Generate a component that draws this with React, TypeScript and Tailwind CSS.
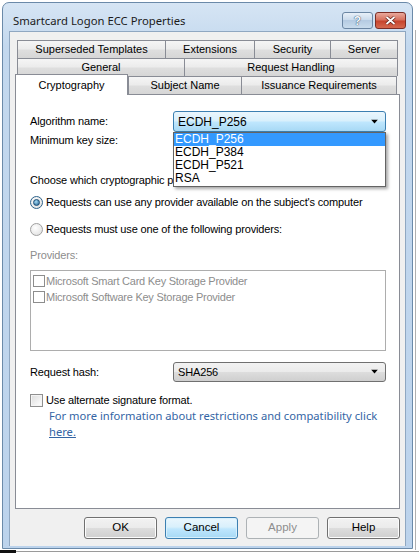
import React from "react";

const sys = { fontFamily: '"Liberation Sans", Arial, sans-serif' };
const seg = { fontFamily: '"Noto Sans", "Open Sans", sans-serif' };

function Tab({ w, label, last }: { w: number; label: string; last?: boolean }) {
  return (
    <div
      style={{ width: w }}
      className={`h-[18px] border-t border-l ${last ? "border-r" : ""} border-[#898c95] bg-[linear-gradient(#f5f5f5_0%,#ececec_45%,#dedede_55%,#d6d6d6_100%)] flex items-center justify-center text-[11px] text-black leading-none shrink-0`}
    >
      {label}
    </div>
  );
}

function Arrow() {
  return (
    <svg width="8" height="5" viewBox="0 0 8 5" className="absolute right-[6px] top-1/2 -translate-y-1/2">
      <path d="M0 0H7L3.5 4Z" fill="#000" />
    </svg>
  );
}

function Btn({ label, kind }: { label: string; kind?: "focus" | "disabled" }) {
  const cls =
    kind === "focus"
      ? "border-[#3c7fb1] bg-[linear-gradient(#eaf6fd_0%,#d9f0fc_45%,#bee6fd_55%,#a7d9f5_100%)] text-black shadow-[inset_0_0_0_1px_#d8f0fc]"
      : kind === "disabled"
      ? "border-[#adb2b5] bg-[#f4f4f4] text-[#8d8d8d]"
      : "border-[#707070] bg-[linear-gradient(#f2f2f2_0%,#ebebeb_50%,#dddddd_50%,#cfcfcf_100%)] text-black shadow-[inset_0_0_0_1px_#fcfcfc]";
  return (
    <div className={`w-[73px] h-[22px] rounded-[3px] border ${cls} flex items-center justify-center text-[11.5px]`}>
      {label}
    </div>
  );
}

function Radio({ on }: { on?: boolean }) {
  return (
    <div
      className={`w-[13px] h-[13px] rounded-full border ${
        on ? "border-[#2c628b]" : "border-[#a0a0a0]"
      } bg-[radial-gradient(circle_at_40%_35%,#ffffff,#dcdcdc)] flex items-center justify-center shrink-0`}
    >
      {on && (
        <div className="w-[7px] h-[7px] rounded-full bg-[radial-gradient(circle_at_40%_35%,#a6dcf6,#1c5a8a)] border border-[#1a4d76]" />
      )}
    </div>
  );
}

export default function App() {
  return (
    <div className="w-[419px] h-[557px] bg-white overflow-hidden relative" style={sys}>
      {/* background right edge */}
      <div className="absolute left-[415px] top-[30px] w-[1px] h-[520px] bg-[#b0b0b0]" />
      <div className="absolute left-0 top-[551px] w-[419px] h-[1px] bg-[#9a9a9a]" />
      <div className="absolute left-0 top-[550px] w-[16px] h-[3px] bg-[#111]" />

      {/* window */}
      <div className="ml-[2px] mt-[2px] w-[411px] h-[547px] rounded-t-[7px] border border-[#6b8aa9] bg-[linear-gradient(#d6e5f4_0%,#c3d8ee_8%,#bcd3ec_100%)] flex flex-col">
        {/* title bar */}
        <div className="h-[28px] flex items-center justify-between shrink-0">
          <div className="pl-[10px] pt-[8px] text-[11.3px] text-[#1b1b1b]" style={seg}>
            Smartcard Logon ECC Properties
          </div>
          <div className="flex gap-[2px] pr-[6px] pt-[9px] self-start">
            <div className="w-[31px] h-[17px] rounded-[3px] border border-[#6b86a3] bg-[linear-gradient(#e8f0f8_0%,#c8d9eb_50%,#b5cbe2_50%,#c9dced_100%)] flex items-center justify-center text-[12px] font-bold text-[#f5f8fb] [text-shadow:0_0_1px_#34506d,0_0_1px_#34506d]">
              ?
            </div>
            <div className="w-[31px] h-[17px] rounded-[3px] border border-[#7a2d26] bg-[linear-gradient(#e9a99c_0%,#d7725f_45%,#c7452e_55%,#d5694f_100%)] flex items-center justify-center">
              <svg width="11" height="9" viewBox="0 0 11 9">
                <path d="M1.5 1L9.5 8M9.5 1L1.5 8" stroke="#5a1c14" strokeWidth="3.2" />
                <path d="M1.5 1L9.5 8M9.5 1L1.5 8" stroke="#ffffff" strokeWidth="1.8" />
              </svg>
            </div>
          </div>
        </div>

        {/* client area */}
        <div className="ml-[6px] w-[397px] h-[515px] bg-[#f0f0f0] border border-[#8fa7c1] border-b-0 flex flex-col shrink-0">
          {/* tabs */}
          <div className="ml-[5px] mt-[8px] flex flex-col">
            <div className="flex pl-[2px]">
              <Tab w={148} label="Superseded Templates" />
              <Tab w={89} label="Extensions" />
              <Tab w={76} label="Security" />
              <Tab w={68} label="Server" last />
            </div>
            <div className="flex pl-[2px]">
              <Tab w={167} label="General" />
              <Tab w={214} label="Request Handling" last />
            </div>
            <div className="flex h-[18px]">
              <div className="relative z-10 w-[113px] h-[21px] -mt-[2px] border-t border-l border-r border-[#898c95] bg-white flex items-start justify-center pt-[2px] text-[11px] shrink-0">
                Cryptography
              </div>
              <Tab w={113} label="Subject Name" />
              <Tab w={156} label="Issuance Requirements" last />
            </div>

            {/* panel */}
            <div className="w-[385px] h-[415px] border border-[#898c95] bg-white flex flex-col pl-[14px] pt-[16px] text-[11px] tracking-[-0.15px] text-black">
              <div className="flex items-center h-[21px] relative z-20">
                <div className="w-[143px]">Algorithm name:</div>
                <div className="relative w-[213px] h-[21px] tracking-normal">
                  <div className="w-full h-full rounded-[3px] border border-[#3c7fb1] bg-[linear-gradient(#eaf6fd_0%,#d9f0fc_45%,#bee6fd_55%,#a7d9f5_100%)] flex items-center pl-[4px] relative text-[12px]">
                    ECDH_P256
                    <Arrow />
                  </div>
                  <div className="absolute left-0 top-[21px] w-[213px] h-[55px] bg-white border border-[#646464] shadow-[2px_2px_3px_rgba(0,0,0,0.35)] z-20 flex flex-col text-[12px] leading-[13px]">
                    <div className="h-[13px] bg-[#3399ff] text-white pl-[1px]">ECDH_P256</div>
                    <div className="h-[13px] pl-[1px]">ECDH_P384</div>
                    <div className="h-[13px] pl-[1px]">ECDH_P521</div>
                    <div className="h-[13px] pl-[1px]">RSA</div>
                  </div>
                </div>
              </div>
              <div className="h-[16px] flex items-center">Minimum key size:</div>
              <div className="h-[16px] mt-[24px] flex items-center whitespace-nowrap">
                Choose which cryptographic providers can be used for requests:
              </div>
              <div className="h-[16px] mt-[6px] flex items-center gap-[3px]">
                <Radio on />
                <span>Requests can use any provider available on the subject's computer</span>
              </div>
              <div className="h-[16px] mt-[11px] flex items-center gap-[3px]">
                <Radio />
                <span>Requests must use one of the following providers:</span>
              </div>
              <div className="h-[16px] mt-[10px] flex items-center text-[#8d8d8d]">Providers:</div>
              <div className="mt-[7px] w-[356px] h-[81px] border border-[#adadad] bg-white flex flex-col pt-[2px] pl-[2px] text-[#8d8d8d] text-[11px] tracking-[-0.25px]">
                <div className="h-[16px] flex items-center">
                  <div className="w-[12px] h-[12px] border border-[#8d8d8d] mr-[1px]" />
                  Microsoft Smart Card Key Storage Provider
                </div>
                <div className="h-[16px] flex items-center">
                  <div className="w-[12px] h-[12px] border border-[#8d8d8d] mr-[1px]" />
                  Microsoft Software Key Storage Provider
                </div>
              </div>
              <div className="flex items-center h-[20px] mt-[11px]">
                <div className="w-[143px]">Request hash:</div>
                <div className="w-[213px] h-[20px] rounded-[3px] border border-[#707070] bg-[linear-gradient(#f2f2f2_0%,#ebebeb_50%,#dddddd_50%,#cfcfcf_100%)] flex items-center pl-[4px] relative">
                  SHA256
                  <Arrow />
                </div>
              </div>
              <div className="h-[16px] mt-[10px] flex items-center gap-[3px]">
                <div className="w-[13px] h-[13px] border border-[#8f8f8f] bg-[linear-gradient(135deg,#dcdcdc,#ffffff)] shadow-[inset_0_0_0_1px_#f4f4f4] shrink-0" />
                <span>Use alternate signature format.</span>
              </div>
              <div className="pl-[19px] text-[11.2px] tracking-normal leading-[16px] text-[#3465a4] whitespace-nowrap" style={seg}>
                <div>For more information about restrictions and compatibility click</div>
                <div className="underline">here.</div>
              </div>
            </div>
          </div>

          {/* buttons */}
          <div className="flex justify-end gap-[8px] pr-[5px] mt-[8px]">
            <Btn label="OK" />
            <Btn label="Cancel" kind="focus" />
            <Btn label="Apply" kind="disabled" />
            <Btn label="Help" />
          </div>
        </div>
      </div>
    </div>
  );
}
